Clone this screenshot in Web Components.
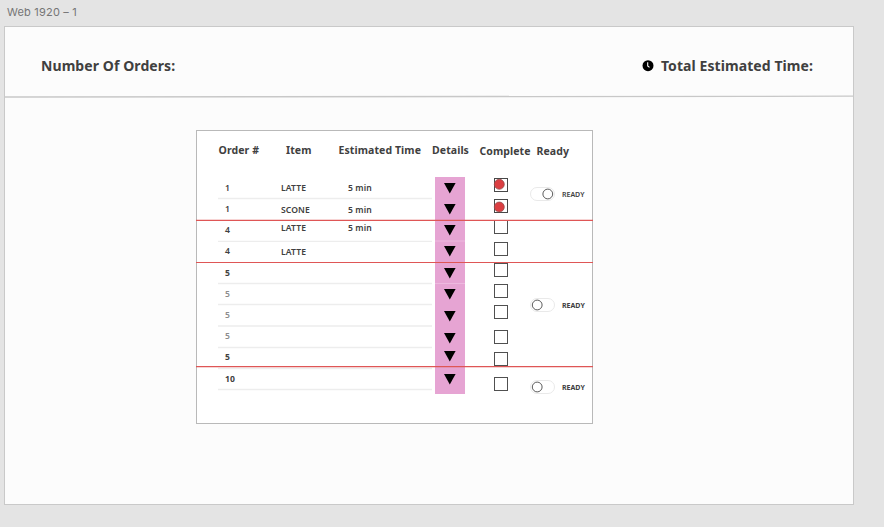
<!DOCTYPE html>
<html lang="en"><head><meta charset="utf-8"><title>Web 1920 – 1</title>
<style>
html,body{margin:0;height:100%;overflow:hidden;background:#e4e4e4;font-family:"Noto Sans","Open Sans",sans-serif;color:#404040}
</style></head><body>
<orders-app></orders-app>
<script>
const define=(name,css,html)=>customElements.define(name,class extends HTMLElement{
  constructor(){super();this.attachShadow({mode:'open'}).innerHTML=`<style>${css}</style>${typeof html==='function'?html(this):html}`}
});

define('order-text',`:host{display:flex;align-items:center;height:14px;white-space:nowrap;font-size:8.6px;font-weight:600;line-height:14px;letter-spacing:.1px}
:host([faded]){opacity:.6}:host([strong]){font-weight:700}`,'<slot></slot>');

define('detail-arrow',`:host{display:block;height:12px}svg{display:block;margin:0 auto}`,
 '<svg width="12" height="12" viewBox="0 0 12 12"><path d="M0 1H11.6L5.8 11.4Z" fill="#000"/></svg>');

define('check-square',`:host{display:block;height:14px;width:14px}svg{display:block;overflow:visible}`,
 '<svg width="14" height="14"><rect x=".5" y=".5" width="13" height="13" fill="#fff" stroke="#505050" stroke-width="1"/></svg>');

define('marked-square',`:host{display:block;height:14px;width:14px}svg{display:block;overflow:visible}`,
 e=>`<svg width="14" height="14"><rect x=".5" y=".5" width="13" height="13" fill="#fff" stroke="#484848"/><circle cx="5.3" cy="${e.getAttribute('dot')}" r="5" fill="#db3f42" stroke="#8a4a4a" stroke-width=".7"/></svg>`);

define('ready-toggle',`:host{display:flex;align-items:center;height:14px;gap:7px;font-size:7px;font-weight:700;white-space:nowrap}
:host([on]){font-weight:600}svg{display:block;flex:none}`,
 e=>`<svg width="25" height="14"><rect x=".5" y=".5" width="24" height="13" rx="6.5" fill="#fff" stroke="#e9e9e9"/><circle cx="${e.hasAttribute('on')?17.8:7.2}" cy="7" r="4.9" fill="#fff" stroke="#484848" stroke-width=".9"/></svg><span><slot></slot></span>`);

define('order-column',`:host{display:flex;flex-direction:column;align-items:flex-start;min-width:0}`,'<slot></slot>');

define('column-heading',`:host{display:block;white-space:nowrap;font-size:10.5px;font-weight:700;line-height:16px;letter-spacing:.09px}`,'<slot></slot>');

define('row-rules',`:host{position:absolute;inset:0;pointer-events:none}svg{display:block}`,
 e=>`<svg width="397" height="294"><g stroke="${e.getAttribute('color')}" stroke-width="${e.getAttribute('weight')}">${
 e.getAttribute('rows').split(' ').map(y=>`<path d="M${e.getAttribute('from')} ${y}H${e.getAttribute('to')}"/>`).join('')}</g></svg>`);

/* Stack cells downward; each one is spaced from the end of the one before. */
function stack(tops,height,make){
  let end=0;
  return tops.map((t,i)=>{const gap=t-end;end=t+height;return make(i,`margin-top:${+gap.toFixed(2)}px`)}).join('');
}
const orderNos=['1','1','4','4','5','5','5','5','5','10'];
const texts=(tops,values,extra=()=>'')=>stack(tops,14,(i,s)=>`<order-text ${extra(i)} style="${s}">${values[i]}</order-text>`);

define('order-table',`
:host{display:block;position:relative;box-sizing:border-box;width:397px;height:294px;background:#fff;border:1px solid #b9b9b9}
.heads{display:grid;grid-template-columns:67.5px 52.5px 93.5px 47.5px 57px 1fr;padding:11px 0 0 21.5px;height:35px;box-sizing:content-box}
.low{margin-top:1px}
.body{display:grid;grid-template-columns:56px 67px 87px 30px 29px 7px 28px 1fr;padding-left:28px;height:216px}
.pink{grid-column:4;background:#e6a4d3;align-items:center}
.checks{grid-column:6/8}
`,`
<row-rules color="#ededed" weight="1.3" from="22" to="236" rows="68.5 111.3 153.5 174.5 196 217.5 238.5 259.5" style="top:-1px;left:-1px"></row-rules>
<div class="heads"><column-heading>Order #</column-heading><column-heading>Item</column-heading><column-heading>Estimated Time</column-heading><column-heading>Details</column-heading><column-heading class="low">Complete</column-heading><column-heading class="low">Ready</column-heading></div>
<div class="body">
<order-column>${texts([3.5,24.5,45.5,67,88.5,109.5,130.5,151.5,172.5,194.5],orderNos,i=>i>4&&i<8?'faded':i>3?'strong':'')}</order-column>
<order-column>${texts([3.5,25.5,43.5,67.5],['LATTE','SCONE','LATTE','LATTE'])}</order-column>
<order-column>${texts([3.5,25.5,43.5],['5 min','5 min','5 min'])}</order-column>
<order-column class="pink">${stack([5,26,47,68,89.5,110.5,132.5,154.5,172.5,196],12,(i,s)=>`<detail-arrow style="${s}"></detail-arrow>`)}</order-column>
<order-column class="checks">${stack([1,22,43,64.5,86,107,128,153,174.5,200],14,(i,s)=>i<2?`<marked-square dot="${i?8:6.3}" style="${s}"></marked-square>`:`<check-square style="${s}"></check-square>`)}</order-column>
<order-column style="margin-left:1px">${stack([10,121,203],14,(i,s)=>`<ready-toggle ${i?'':'on'} style="${s}">READY</ready-toggle>`)}</order-column>
</div>
<row-rules color="#edb9df" weight="1" from="239" to="269" rows="111 153.5" style="top:-1px;left:-1px"></row-rules>
<row-rules color="#df5656" weight="1.2" from="0" to="397" rows="90.3 132.5 236.6" style="top:-1px;left:-1px"></row-rules>
`);

define('clock-icon',`:host{display:block}svg{display:block}`,
 '<svg width="12" height="12" viewBox="0 0 12 12"><circle cx="6" cy="5.7" r="5.5"/><path d="M5.7 2.3V6L7.5 7.4" fill="none" stroke="#fff" stroke-width="1.1"/></svg>');

define('board-header',`:host{display:flex;justify-content:space-between;align-items:center;box-sizing:border-box;height:68px;padding:10px 40px 0 36px;font-size:14px;font-weight:700;line-height:20px;letter-spacing:.08px;white-space:nowrap}
.time{display:flex;align-items:center;gap:7px}`,
 '<span>Number Of Orders:</span><span class="time"><clock-icon></clock-icon><span>Total Estimated Time:</span></span>');

define('orders-app',`
:host{display:block;padding-left:4px}
.title{height:26px;padding-left:3px;font:11px/24px Inter,sans-serif;color:#757575;letter-spacing:.2px}
.board{box-sizing:border-box;width:850px;height:479px;background:#fcfcfc;border:1px solid #c9c9c9}
.divider{display:block}
order-table{margin:32px 0 0 191px}
`,`<div class="title">Web 1920 – 1</div>
<div class="board"><board-header></board-header>
<svg class="divider" width="848" height="3"><path d="M0 2L848 1.2" stroke="#c8c8c8" stroke-width="1.3"/></svg>
<order-table></order-table></div>`);
</script></body></html>
